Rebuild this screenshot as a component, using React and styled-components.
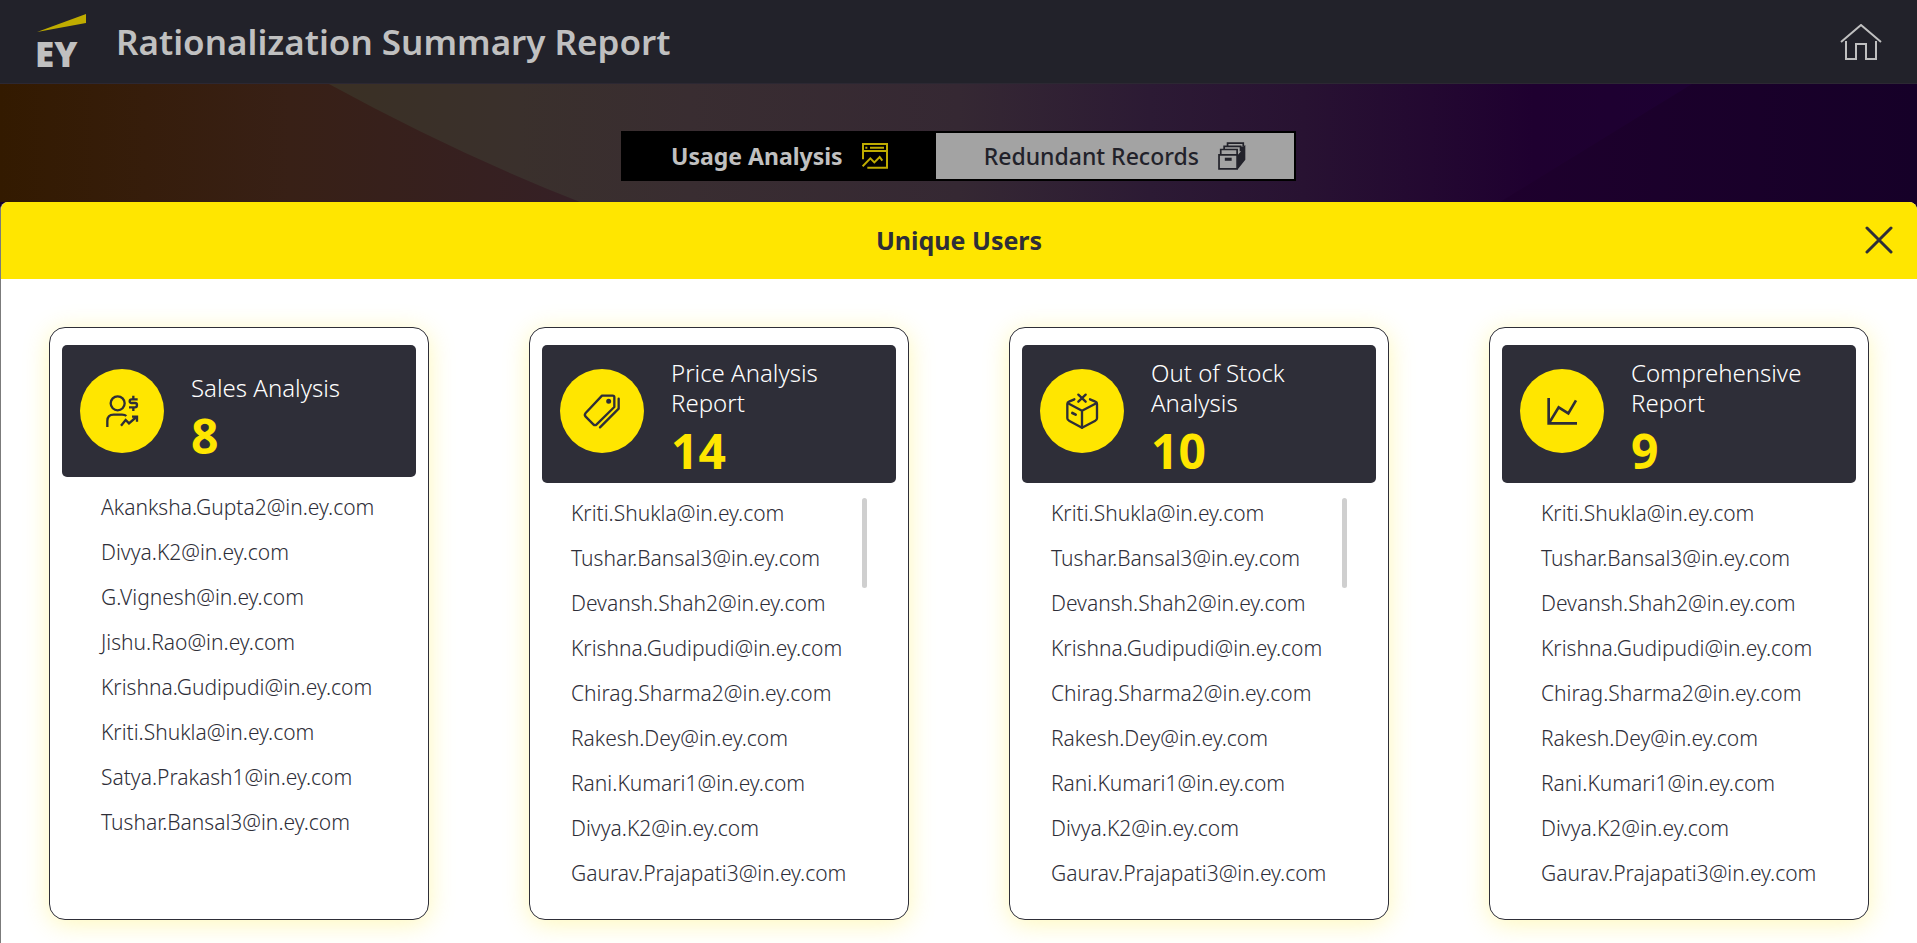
import React, { useState } from "react";
import styled, { createGlobalStyle } from "styled-components";

const sharedUsers = [
  "Kriti.Shukla@in.ey.com",
  "Tushar.Bansal3@in.ey.com",
  "Devansh.Shah2@in.ey.com",
  "Krishna.Gudipudi@in.ey.com",
  "Chirag.Sharma2@in.ey.com",
  "Rakesh.Dey@in.ey.com",
  "Rani.Kumari1@in.ey.com",
  "Divya.K2@in.ey.com",
  "Gaurav.Prajapati3@in.ey.com",
];

const reports = [
  {
    title: "Sales Analysis",
    count: 8,
    icon: "sales",
    short: true,
    users: [
      "Akanksha.Gupta2@in.ey.com",
      "Divya.K2@in.ey.com",
      "G.Vignesh@in.ey.com",
      "Jishu.Rao@in.ey.com",
      "Krishna.Gudipudi@in.ey.com",
      "Kriti.Shukla@in.ey.com",
      "Satya.Prakash1@in.ey.com",
      "Tushar.Bansal3@in.ey.com",
    ],
  },
  { title: "Price Analysis Report", count: 14, icon: "price", users: sharedUsers },
  { title: "Out of Stock Analysis", count: 10, icon: "stock", users: sharedUsers },
  { title: "Comprehensive Report", count: 9, icon: "chart", users: sharedUsers },
];

const icons = {
  sales: (
    <g strokeWidth="7">
      <circle cx="113" cy="103" r="21" />
      <path d="M82 174V156C82 144 89 137 101 137H126C132 137 136 138 139 141" />
      <path d="M123 170L137 153L147 163L169 144M156 143H171V158" />
      <path d="M173 91H155Q149 91 149 97Q149 102 155 102H165Q171 102 171 108Q171 115 165 115H147M160 80V91M160 115V126" />
    </g>
  ),
  price: (
    <g strokeWidth="7" strokeLinejoin="round" strokeLinecap="round">
      <path d="M126 80H158Q163 80 163 85V114L110 166Q105 171 100 166L77 143Q72 138 77 132Z" />
      <circle cx="146" cy="97" r="4" fill="#2e2e38" />
      <path d="M176 89V119L120 175" />
    </g>
  ),
  stock: (
    <g strokeWidth="7" strokeLinejoin="round" strokeLinecap="round">
      <path d="M103 91L87 98Q82 100 82 105V148Q82 153 87 155L126 176L166 155Q171 153 171 148V105Q171 100 166 98L150 91" />
      <path d="M84 103L126 125L169 103M126 125V176" />
      <path d="M115 77L137 98M137 77L115 98" />
      <path d="M97 132L107 137" strokeWidth="8" />
    </g>
  ),
  chart: (
    <g strokeWidth="8">
      <path d="M86 87V163H171" />
      <path d="M88 161L116 115L145 133L168 94" />
    </g>
  ),
};

const Logo = () => (
  <LogoArt viewBox="0 0 52 84" role="img" aria-label="EY">
    <path d="M2 32L51 14V23Z" fill="#bfac00" />
    <text x="0" y="67" fill="#c0c0c0" fontFamily="Noto Sans, sans-serif" fontSize="35" fontWeight="900">
      EY
    </text>
  </LogoArt>
);

const HomeIcon = () => (
  <svg width="42" height="36" viewBox="0 0 42 36" fill="none" stroke="#c0c0c0" strokeWidth="2">
    <path d="M1 18L21 1L41 18" />
    <path d="M6 17V35H16V20H26V35H36V17" />
  </svg>
);

const UsageIcon = () => (
  <svg width="26" height="26" viewBox="0 0 78 78" fill="none" stroke="#bfac00" strokeWidth="6">
    <path d="M3 49V3H75V74H16M3 24H75M10 14H16M24 14H66" />
    <path d="M2 70L25 46L37 58L53 42L61 53" />
  </svg>
);

const RecordsIcon = () => (
  <svg width="28" height="28" viewBox="0 0 82 82" fill="none" stroke="#22222a" strokeWidth="5">
    <path d="M28 12V3H74V13M18 22V13H66V27M8 38V22H56V38" />
    <path d="M57 39L67 28V13H74L80 9V52L58 80Z" fill="#22222a" stroke="none" />
    <path d="M3 38H56V79H3Z" />
    <path d="M20 46H40V55H20Z" fill="#22222a" stroke="none" />
  </svg>
);

const CloseIcon = () => (
  <svg width="28" height="28" viewBox="0 0 28 28" stroke="#2e2e38" strokeWidth="3" strokeLinecap="round">
    <path d="M2 2L26 26M26 2L2 26" />
  </svg>
);

const Backdrop = () => (
  <BackdropArt viewBox="0 0 1917 118" preserveAspectRatio="none" aria-hidden="true">
    <defs>
      <linearGradient id="base">
        <stop offset="0.17" stopColor="#3a3024" />
        <stop offset="0.27" stopColor="#3a302c" />
        <stop offset="0.36" stopColor="#392d31" />
        <stop offset="0.5" stopColor="#352833" />
        <stop offset="0.6" stopColor="#2c1a34" />
        <stop offset="0.68" stopColor="#281232" />
        <stop offset="0.8" stopColor="#1f0030" />
        <stop offset="0.88" stopColor="#1d0032" />
      </linearGradient>
      <linearGradient id="left">
        <stop offset="0" stopColor="#331a00" />
        <stop offset="0.25" stopColor="#361d0b" />
        <stop offset="0.5" stopColor="#382016" />
        <stop offset="1" stopColor="#352026" />
      </linearGradient>
      <linearGradient id="right">
        <stop offset="0" stopColor="#1e002d" />
        <stop offset="1" stopColor="#160028" />
      </linearGradient>
    </defs>
    <path d="M0 0H1917V118H0Z" fill="url(#base)" />
    <path d="M0 0H329Q455 69 580 118H0Z" fill="url(#left)" />
    <path d="M1692 0H1917V118H1500Z" fill="url(#right)" />
  </BackdropArt>
);

const ReportCard = ({ report }) => (
  <Card>
    <CardHead $short={report.short}>
      <Badge viewBox="0 0 252 252" aria-hidden="true">
        <circle cx="126" cy="126" r="126" fill="#ffe600" />
        <g fill="none" stroke="#2e2e38">{icons[report.icon]}</g>
      </Badge>
      <CardInfo $short={report.short}>
        <CardTitle>{report.title}</CardTitle>
        <Count>{report.count}</Count>
      </CardInfo>
    </CardHead>
    <CardBody>
      <UserList $scroll={report.count > 9}>
        {report.users.map((user) => (
          <li key={user}>{user}</li>
        ))}
      </UserList>
      {report.count > 9 && <ScrollThumb />}
    </CardBody>
  </Card>
);

export default function App() {
  const [tab, setTab] = useState("usage");
  const [open, setOpen] = useState(true);

  return (
    <Page>
      <GlobalStyle />
      <Header>
        <Logo />
        <h1>Rationalization Summary Report</h1>
        <IconButton aria-label="Home">
          <HomeIcon />
        </IconButton>
      </Header>
      <Hero>
        <Backdrop />
        <Tabs>
          <Tab $active={tab === "usage"} onClick={() => setTab("usage")}>
            Usage Analysis
            <UsageIcon />
          </Tab>
          <Tab $active={tab === "records"} onClick={() => setTab("records")}>
            Redundant Records
            <RecordsIcon />
          </Tab>
        </Tabs>
      </Hero>
      {open && (
        <Panel>
          <PanelHeader>
            <h2>Unique Users</h2>
            <IconButton aria-label="Close" onClick={() => setOpen(false)}>
              <CloseIcon />
            </IconButton>
          </PanelHeader>
          <Cards>
            {reports.map((report) => (
              <ReportCard key={report.title} report={report} />
            ))}
          </Cards>
        </Panel>
      )}
    </Page>
  );
}

const GlobalStyle = createGlobalStyle`
  * {
    box-sizing: border-box;
  }

  body {
    margin: 0;
    background: #16002a;
    color: #2e2e38;
    font-family: "Noto Sans", sans-serif;
  }

  h1, h2, h3, p, ul {
    margin: 0;
    padding: 0;
  }
`;

const Page = styled.div`
  display: flex;
  flex-direction: column;
  height: 100vh;
  overflow: hidden;
`;

const Header = styled.header`
  display: flex;
  align-items: center;
  flex-shrink: 0;
  height: 84px;
  padding: 0 35px;
  background: #22222a;
  border-bottom: 1px solid #2c2833;

  h1 {
    flex: 1;
    margin-left: 29px;
    color: #c0c0c0;
    font-size: 35px;
    font-weight: 600;
    line-height: 40px;
  }
`;

const LogoArt = styled.svg`
  flex-shrink: 0;
  width: 52px;
  height: 84px;
  overflow: visible;
`;

const IconButton = styled.button`
  display: flex;
  padding: 0;
  border: none;
  background: none;
  cursor: pointer;
`;

const Hero = styled.div`
  position: relative;
  display: flex;
  justify-content: center;
  flex-shrink: 0;
  height: 118px;
  padding-top: 47px;
`;

const BackdropArt = styled.svg`
  position: absolute;
  inset: 0;
  width: 100%;
  height: 100%;
`;

const Tabs = styled.div`
  position: relative;
  display: flex;
  height: 50px;
  border: 2px solid #000;
`;

const Tab = styled.button`
  display: flex;
  align-items: center;
  gap: 19px;
  padding: 0 48px;
  border: none;
  background: ${(p) => (p.$active ? "#000" : "#a3a3a3")};
  color: ${(p) => (p.$active ? "#c0c0c0" : "#22222a")};
  font-family: inherit;
  font-size: 23px;
  font-weight: ${(p) => (p.$active ? 700 : 500)};
  line-height: 30px;
  cursor: pointer;
`;

const Panel = styled.section`
  flex: 1;
  display: flex;
  flex-direction: column;
  min-height: 0;
  border-left: 1px solid #7b7b7b;
  border-radius: 8px 8px 0 0;
  background: #fff;
  overflow: hidden;
`;

const PanelHeader = styled.div`
  display: grid;
  grid-template-columns: 28px 1fr 28px;
  align-items: center;
  flex-shrink: 0;
  height: 77px;
  padding: 0 24px 2px;
  background: #ffe600;

  h2 {
    grid-column: 2;
    font-size: 25px;
    font-weight: 700;
    line-height: 32px;
    text-align: center;
  }
`;

const Cards = styled.div`
  display: grid;
  grid-template-columns: repeat(4, 1fr);
  gap: 100px;
  padding: 48px;
`;

const Card = styled.article`
  height: 593px;
  padding: 17px 12px;
  border: 1px solid #2e2e38;
  border-radius: 16px;
  background: #fff;
  box-shadow: 0 4px 26px rgba(255, 230, 0, 0.28);
`;

const CardHead = styled.div`
  display: flex;
  gap: 27px;
  height: ${(p) => (p.$short ? 132 : 138)}px;
  padding: 0 18px;
  border-radius: 5px;
  background: #2e2e38;
`;

const Badge = styled.svg`
  flex-shrink: 0;
  width: 84px;
  height: 84px;
  margin-top: 24px;
`;

const CardInfo = styled.div`
  padding-top: ${(p) => (p.$short ? 28 : 13)}px;
`;

const CardTitle = styled.h3`
  max-width: 180px;
  color: #fff;
  font-size: 24px;
  font-weight: 300;
  line-height: 30px;
`;

const Count = styled.p`
  margin-top: 9px;
  color: #ffe600;
  font-size: 48px;
  font-weight: 700;
  line-height: 48px;
`;

const CardBody = styled.div`
  display: flex;
  justify-content: space-between;
  padding: 8px 29px 0 0;
`;

const UserList = styled.ul`
  max-height: 405px;
  padding-left: ${(p) => (p.$scroll ? 29 : 39)}px;
  overflow: hidden auto;
  list-style: none;
  font-size: 21px;
  font-weight: 350;
  line-height: 45px;
`;

const ScrollThumb = styled.span`
  width: 5px;
  height: 90px;
  margin-top: 7px;
  border-radius: 3px;
  background: #cfcfcf;
`;
